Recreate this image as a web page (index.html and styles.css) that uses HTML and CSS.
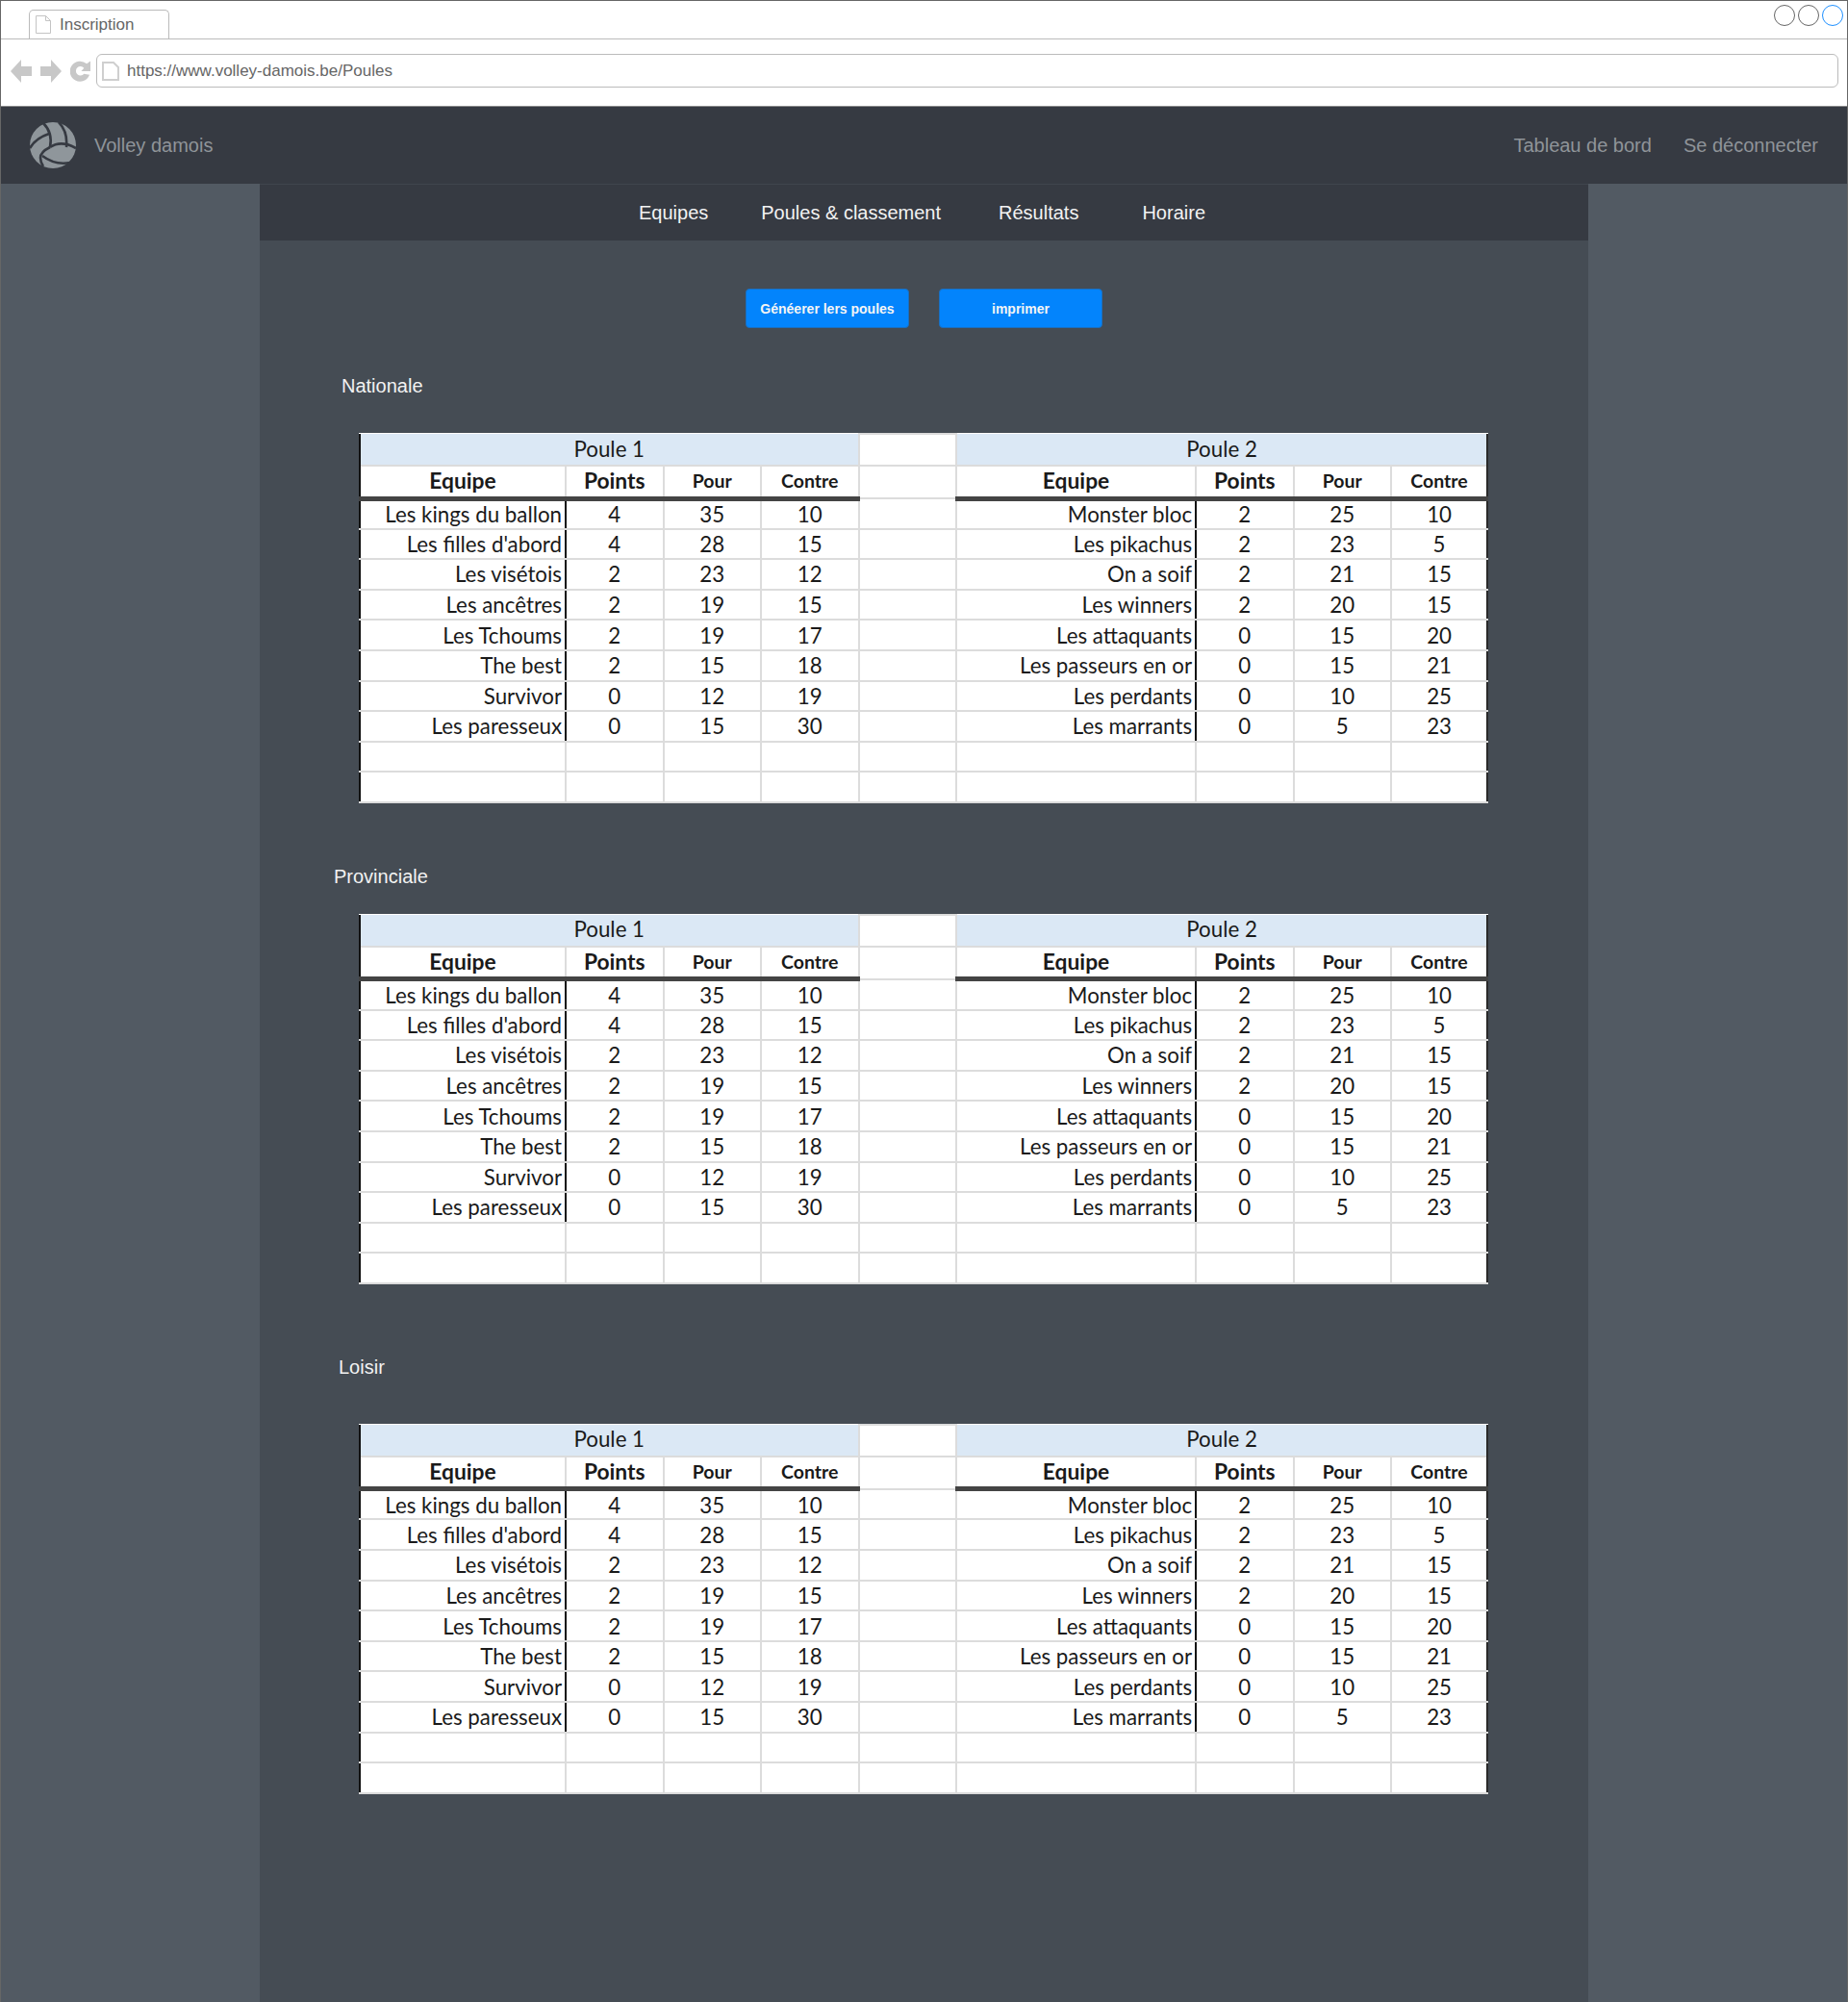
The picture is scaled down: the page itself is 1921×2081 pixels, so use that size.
FILE: index.html
```html
<!doctype html>
<html lang="fr">
  <head>
    <meta charset="UTF-8" />
    <title>Inscription</title>
    <link rel="stylesheet" href="styles.css">
  </head>
  <body>
    <div class="window">
      <div class="browser">
        <div class="tab-bar">
          <div class="tab">
            <svg class="page-icon" width="16" height="19" viewBox="0 0 16 19"><path d="M.5.5h10l5 5v13H.5z M10.500.5v5h5" fill="#fff" stroke="#c4c4c4"/></svg>
            <span>Inscription</span>
          </div>
          <div class="win-buttons">
            <span class="win-btn"></span>
            <span class="win-btn"></span>
            <span class="win-btn win-btn-active"></span>
          </div>
        </div>
        <div class="url-bar">
          <svg width="22" height="24" viewBox="0 0 22 24" class="nav-icon"><path d="M0 12 11 0v7h11v10H11v7z" fill="#c8c8c8"/></svg>
          <svg width="22" height="24" viewBox="0 0 22 24" class="nav-icon"><path d="M22 12 11 0v7H0v10h11v7z" fill="#c8c8c8"/></svg>
          <svg width="21" height="24" viewBox="0 0 22 24" class="nav-icon"><path d="M21 16a11 11 0 1 1-3-12l4-3v11H12l3-3.500a5 5 0 1 0 0 6.500z" fill="#c8c8c8"/></svg>
          <div class="address">
            <svg class="page-icon" width="18" height="20" viewBox="0 0 18 20"><path d="M1 1h11l5 5v13H1z" fill="#fff" stroke="#cfcfcf" stroke-width="2"/></svg>
            <span>https://www.volley-damois.be/Poules</span>
          </div>
        </div>
      </div>

      <header class="topbar">
        <a class="brand" href="#">
          <svg width="48" height="48" viewBox="0 0 48 48">
            <circle cx="24" cy="24" r="24" fill="#8f969b"/>
            <g fill="none" stroke="#363a42" stroke-width="2.600">
              <path d="M14 1c6 6 9 15 7 25"/>
              <path d="M30 0c6 6 9 16 8 26"/>
              <path d="M21 26c9-6 18-4 27 1"/>
              <path d="M20 12C11 15 4 20 0 27"/>
              <path d="M21 26c-6 3-10 7-10 11 0 3 1 6 3 9"/>
              <path d="M13 35c8 6 19 9 29 7"/>
            </g>
          </svg>
          <span>Volley damois</span>
        </a>
        <nav class="topbar-links">
          <a href="#">Tableau de bord</a>
          <a href="#">Se déconnecter</a>
        </nav>
      </header>

      <main class="container">
        <nav class="menu">
          <a href="#">Equipes</a>
          <a href="#">Poules &amp; classement</a>
          <a href="#">Résultats</a>
          <a href="#">Horaire</a>
        </nav>

        <div class="actions">
          <button class="btn">Généerer lers poules</button>
          <button class="btn">imprimer</button>
        </div>

        <h2 class="level level-nationale">Nationale</h2>
        <table class="poules">
          <colgroup><col class="c-team"><col class="c-num"><col class="c-num"><col class="c-num"><col class="c-gap"><col class="c-team2"><col class="c-num"><col class="c-num"><col class="c-num2"></colgroup>
          <thead>
            <tr class="title-row"><th colspan="4" class="title">Poule 1</th><th class="gap"></th><th colspan="4" class="title">Poule 2</th></tr>
            <tr class="head-row"><th class="big">Equipe</th><th class="big">Points</th><th>Pour</th><th>Contre</th><th class="gap"></th><th class="big">Equipe</th><th class="big">Points</th><th>Pour</th><th>Contre</th></tr>
          </thead>
          <tbody>
            <tr><td class="team">Les kings du ballon</td><td>4</td><td>35</td><td>10</td><td></td><td class="team">Monster bloc</td><td>2</td><td>25</td><td>10</td></tr>
            <tr><td class="team">Les filles d'abord</td><td>4</td><td>28</td><td>15</td><td></td><td class="team">Les pikachus</td><td>2</td><td>23</td><td>5</td></tr>
            <tr><td class="team">Les visétois</td><td>2</td><td>23</td><td>12</td><td></td><td class="team">On a soif</td><td>2</td><td>21</td><td>15</td></tr>
            <tr><td class="team">Les ancêtres</td><td>2</td><td>19</td><td>15</td><td></td><td class="team">Les winners</td><td>2</td><td>20</td><td>15</td></tr>
            <tr><td class="team">Les Tchoums</td><td>2</td><td>19</td><td>17</td><td></td><td class="team">Les attaquants</td><td>0</td><td>15</td><td>20</td></tr>
            <tr><td class="team">The best</td><td>2</td><td>15</td><td>18</td><td></td><td class="team">Les passeurs en or</td><td>0</td><td>15</td><td>21</td></tr>
            <tr><td class="team">Survivor</td><td>0</td><td>12</td><td>19</td><td></td><td class="team">Les perdants</td><td>0</td><td>10</td><td>25</td></tr>
            <tr><td class="team">Les paresseux</td><td>0</td><td>15</td><td>30</td><td></td><td class="team">Les marrants</td><td>0</td><td>5</td><td>23</td></tr>
            <tr><td></td><td></td><td></td><td></td><td></td><td></td><td></td><td></td><td></td></tr>
            <tr><td></td><td></td><td></td><td></td><td></td><td></td><td></td><td></td><td></td></tr>
          </tbody>
        </table>

        <h2 class="level level-provinciale">Provinciale</h2>
        <table class="poules">
          <colgroup><col class="c-team"><col class="c-num"><col class="c-num"><col class="c-num"><col class="c-gap"><col class="c-team2"><col class="c-num"><col class="c-num"><col class="c-num2"></colgroup>
          <thead>
            <tr class="title-row"><th colspan="4" class="title">Poule 1</th><th class="gap"></th><th colspan="4" class="title">Poule 2</th></tr>
            <tr class="head-row"><th class="big">Equipe</th><th class="big">Points</th><th>Pour</th><th>Contre</th><th class="gap"></th><th class="big">Equipe</th><th class="big">Points</th><th>Pour</th><th>Contre</th></tr>
          </thead>
          <tbody>
            <tr><td class="team">Les kings du ballon</td><td>4</td><td>35</td><td>10</td><td></td><td class="team">Monster bloc</td><td>2</td><td>25</td><td>10</td></tr>
            <tr><td class="team">Les filles d'abord</td><td>4</td><td>28</td><td>15</td><td></td><td class="team">Les pikachus</td><td>2</td><td>23</td><td>5</td></tr>
            <tr><td class="team">Les visétois</td><td>2</td><td>23</td><td>12</td><td></td><td class="team">On a soif</td><td>2</td><td>21</td><td>15</td></tr>
            <tr><td class="team">Les ancêtres</td><td>2</td><td>19</td><td>15</td><td></td><td class="team">Les winners</td><td>2</td><td>20</td><td>15</td></tr>
            <tr><td class="team">Les Tchoums</td><td>2</td><td>19</td><td>17</td><td></td><td class="team">Les attaquants</td><td>0</td><td>15</td><td>20</td></tr>
            <tr><td class="team">The best</td><td>2</td><td>15</td><td>18</td><td></td><td class="team">Les passeurs en or</td><td>0</td><td>15</td><td>21</td></tr>
            <tr><td class="team">Survivor</td><td>0</td><td>12</td><td>19</td><td></td><td class="team">Les perdants</td><td>0</td><td>10</td><td>25</td></tr>
            <tr><td class="team">Les paresseux</td><td>0</td><td>15</td><td>30</td><td></td><td class="team">Les marrants</td><td>0</td><td>5</td><td>23</td></tr>
            <tr><td></td><td></td><td></td><td></td><td></td><td></td><td></td><td></td><td></td></tr>
            <tr><td></td><td></td><td></td><td></td><td></td><td></td><td></td><td></td><td></td></tr>
          </tbody>
        </table>

        <h2 class="level level-loisir">Loisir</h2>
        <table class="poules">
          <colgroup><col class="c-team"><col class="c-num"><col class="c-num"><col class="c-num"><col class="c-gap"><col class="c-team2"><col class="c-num"><col class="c-num"><col class="c-num2"></colgroup>
          <thead>
            <tr class="title-row"><th colspan="4" class="title">Poule 1</th><th class="gap"></th><th colspan="4" class="title">Poule 2</th></tr>
            <tr class="head-row"><th class="big">Equipe</th><th class="big">Points</th><th>Pour</th><th>Contre</th><th class="gap"></th><th class="big">Equipe</th><th class="big">Points</th><th>Pour</th><th>Contre</th></tr>
          </thead>
          <tbody>
            <tr><td class="team">Les kings du ballon</td><td>4</td><td>35</td><td>10</td><td></td><td class="team">Monster bloc</td><td>2</td><td>25</td><td>10</td></tr>
            <tr><td class="team">Les filles d'abord</td><td>4</td><td>28</td><td>15</td><td></td><td class="team">Les pikachus</td><td>2</td><td>23</td><td>5</td></tr>
            <tr><td class="team">Les visétois</td><td>2</td><td>23</td><td>12</td><td></td><td class="team">On a soif</td><td>2</td><td>21</td><td>15</td></tr>
            <tr><td class="team">Les ancêtres</td><td>2</td><td>19</td><td>15</td><td></td><td class="team">Les winners</td><td>2</td><td>20</td><td>15</td></tr>
            <tr><td class="team">Les Tchoums</td><td>2</td><td>19</td><td>17</td><td></td><td class="team">Les attaquants</td><td>0</td><td>15</td><td>20</td></tr>
            <tr><td class="team">The best</td><td>2</td><td>15</td><td>18</td><td></td><td class="team">Les passeurs en or</td><td>0</td><td>15</td><td>21</td></tr>
            <tr><td class="team">Survivor</td><td>0</td><td>12</td><td>19</td><td></td><td class="team">Les perdants</td><td>0</td><td>10</td><td>25</td></tr>
            <tr><td class="team">Les paresseux</td><td>0</td><td>15</td><td>30</td><td></td><td class="team">Les marrants</td><td>0</td><td>5</td><td>23</td></tr>
            <tr><td></td><td></td><td></td><td></td><td></td><td></td><td></td><td></td><td></td></tr>
            <tr><td></td><td></td><td></td><td></td><td></td><td></td><td></td><td></td><td></td></tr>
          </tbody>
        </table>
      </main>
    </div>
  </body>
</html>
```

FILE: styles.css
```css
body {
  margin: 0;
  font-family: 'Liberation Sans', Arial, sans-serif;
  background: #525a63;
}
a {
  text-decoration: none;
  color: inherit;
}
.window {
  border: 1px solid #666;
  border-bottom: 0;
  min-height: 2080px;
  display: flex;
  flex-direction: column;
}

/* browser frame */
.browser {
  background: #fff;
  height: 109px;
  border-bottom: 1px solid #888;
}
.tab-bar {
  height: 39px;
  border-bottom: 1px solid #bbb;
  display: flex;
  justify-content: space-between;
  padding-left: 29px;
}
.tab {
  display: flex;
  align-items: center;
  gap: 9px;
  width: 146px;
  height: 30px;
  margin-top: 9px;
  padding-left: 6px;
  box-sizing: border-box;
  border: 1px solid #bbb;
  border-bottom: 0;
  border-radius: 5px 5px 0 0;
  font-size: 17px;
  color: #666;
}
.win-buttons {
  display: flex;
  gap: 3px;
  margin: 4px 4px 0 0;
}
.win-btn {
  width: 20px;
  height: 20px;
  border: 1px solid #666;
  border-radius: 50%;
}
.win-btn-active {
  border-color: #1e90ff;
}
.url-bar {
  display: flex;
  align-items: center;
  height: 65px;
  padding: 0 9px 0 10px;
  gap: 9px;
}
.nav-icon {
  flex: none;
}
.address {
  flex: 1;
  display: flex;
  align-items: center;
  gap: 8px;
  height: 35px;
  box-sizing: border-box;
  margin-left: -3px;
  padding-left: 5px;
  border: 1px solid #bbb;
  border-radius: 6px;
  font-size: 17px;
  color: #666;
}

/* site header */
.topbar {
  height: 80px;
  padding: 0 30px;
  background: #363a42;
  display: flex;
  align-items: center;
  justify-content: space-between;
  font-size: 20px;
  color: #8f9499;
}
.brand {
  display: flex;
  align-items: center;
  gap: 19px;
}
.topbar-links {
  display: flex;
  gap: 33px;
}

.container {
  flex: 1;
  width: 1381px;
  margin-left: 269px;
  background: #454c54;
}
.menu {
  display: flex;
  align-items: center;
  height: 59px;
  padding-left: 394px;
  background: #363a42;
  border-top: 1px solid #40454d;
  box-sizing: border-box;
  font-size: 20px;
  color: #f2f2f2;
}
.menu a:nth-child(2) {
  margin-left: 55px;
}
.menu a:nth-child(3) {
  margin-left: 60px;
}
.menu a:nth-child(4) {
  margin-left: 66px;
}
.actions {
  display: flex;
  justify-content: center;
  gap: 31px;
  margin-top: 50px;
}
.btn {
  width: 170px;
  height: 41px;
  background: #0384fc;
  border: 1px solid #1a6fc0;
  border-radius: 4px;
  font-family: inherit;
  font-weight: bold;
  font-size: 14px;
  color: #f5f5f5;
}
.level {
  margin: 0;
  font-size: 20px;
  font-weight: normal;
  line-height: 24px;
  color: #f2f2f2;
}
.level-nationale {
  margin: 48px 0 37px 85px;
}
.level-provinciale {
  margin: 64px 0 27px 77px;
}
.level-loisir {
  margin: 74px 0 47px 82px;
}

/* poules table, pasted sheet look */
.poules {
  table-layout: fixed;
  border-collapse: collapse;
  width: 1172px;
  margin-left: 103px;
  background: #fff;
  font-family: Lato, 'Liberation Sans', sans-serif;
  font-size: 22.3px;
  color: #1a1a1a;
}
.c-team {
  width: 214px;
}
.c-num {
  width: 101.500px;
}
.c-gap {
  width: 101.500px;
}
.c-team2 {
  width: 249px;
}
.c-num2 {
  width: 100px;
}
.poules th,
.poules td {
  padding: 0;
  border: 2px solid #dcdcdc;
  text-align: center;
  overflow: hidden;
  white-space: nowrap;
}
.poules tbody tr {
  height: 31.6px;
}
.title-row {
  height: 33px;
}
.head-row {
  height: 34px;
}
.poules .title {
  background: #dbe8f5;
  font-weight: normal;
  border: 0;
  padding-bottom: 2px;
}
.poules .head-row th {
  font-size: 19.5px;
  border-bottom: 5px solid #444;
  padding-bottom: 2px;
}
.poules .head-row .big {
  font-size: 22.8px;
}
.poules .head-row .gap {
  border-bottom: 2px solid #dcdcdc;
}
.poules .team {
  text-align: right;
  padding-right: 3px;
  border-right: 2px solid #111;
}
.poules tr > :first-child {
  border-left: 2px solid #111;
}
.poules tr > :last-child {
  border-right: 2px solid #2a2a2a;
}
```
